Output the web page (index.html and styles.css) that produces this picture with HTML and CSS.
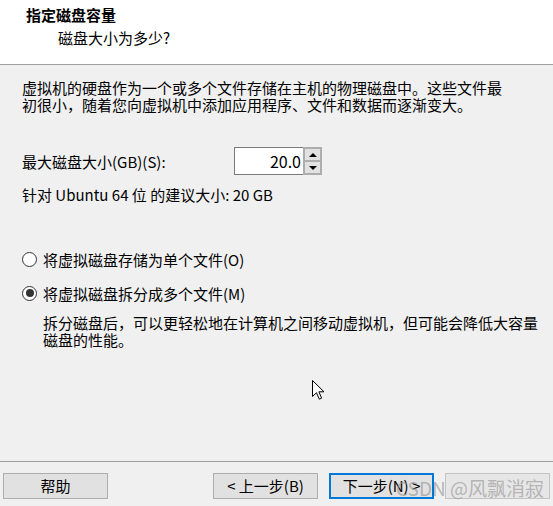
FILE: index.html
```html
<!DOCTYPE html>
<html lang="zh-CN">
<head>
<meta charset="utf-8">
<title>新建虚拟机向导</title>
<link rel="stylesheet" href="styles.css">
</head>
<body>
<div class="dialog">
  <header class="header">
    <div class="title">指定磁盘容量</div>
    <div class="subtitle">磁盘大小为多少?</div>
  </header>
  <main class="content">
    <p class="intro">虚拟机的硬盘作为一个或多个文件存储在主机的物理磁盘中。这些文件最<br>初很小，随着您向虚拟机中添加应用程序、文件和数据而逐渐变大。</p>
    <div class="size-row">
      <label class="size-label">最大磁盘大小(GB)(S):</label>
      <div class="spin">
        <div class="spin-input">20.0</div>
        <div class="spin-btns">
          <div class="spin-btn"><span class="tri-up"></span></div>
          <div class="spin-btn"><span class="tri-down"></span></div>
        </div>
      </div>
    </div>
    <p class="hint">针对 Ubuntu 64 位 的建议大小: 20 GB</p>
    <div class="radio-row first">
      <span class="radio"></span>
      <span class="radio-label">将虚拟磁盘存储为单个文件(O)</span>
    </div>
    <div class="radio-row second">
      <span class="radio checked"></span>
      <span class="radio-label">将虚拟磁盘拆分成多个文件(M)</span>
    </div>
    <p class="desc">拆分磁盘后，可以更轻松地在计算机之间移动虚拟机，但可能会降低大容量<br>磁盘的性能。</p>
  </main>
  <footer class="footer">
    <button class="btn">帮助</button>
    <div class="spacer"></div>
    <button class="btn">&lt; 上一步(B)</button>
    <button class="btn primary">下一步(N) &gt;</button>
    <button class="btn disabled"></button>
  </footer>
  <svg class="cursor" width="14" height="21" viewBox="0 0 14 21">
    <path d="M0.5 0.5 L0.5 16.5 L4.5 12.7 L7.3 19.2 L9.6 18.2 L6.9 11.8 L12 11.8 Z" fill="#fff" stroke="#000" stroke-width="1"/>
  </svg>
  <div class="watermark">CSDN @风飘消寂</div>
</div>
</body>
</html>
```

FILE: styles.css
```css
* { box-sizing: border-box; }
html, body {
  margin: 0;
  padding: 0;
}
body {
  background: #f0f0f0;
  font-family: "Noto Sans CJK SC", "Noto Sans", sans-serif;
  font-size: 15px;
  color: #000;
}
.dialog {
  position: relative;
  width: 553px;
  height: 506px;
  display: flex;
  flex-direction: column;
  overflow: hidden;
}
.header {
  background: #fff;
  height: 65px;
  border-bottom: 1px solid #a0a0a0;
  padding: 5px 0 0 26px;
}
.title {
  font-weight: bold;
  font-size: 15px;
  line-height: 20px;
}
.subtitle {
  padding-left: 32px;
  font-size: 15px;
  line-height: 20px;
  margin-top: 3px;
}
.content {
  flex: 1;
  padding: 14px 10px 0 22px;
}
.intro {
  margin: 0;
  line-height: 17px;
}
.size-row {
  display: flex;
  align-items: center;
  margin-top: 34px;
  height: 28px;
}
.size-label {
  width: 212px;
}
.spin {
  display: flex;
  height: 28px;
}
.spin-input {
  width: 69px;
  height: 28px;
  background: #fff;
  border: 1px solid #7a7a7a;
  border-right: none;
  text-align: right;
  padding-right: 2px;
  line-height: 26px;
  font-size: 16px;
}
.spin-btns {
  display: flex;
  flex-direction: column;
  width: 19px;
  border: 1px solid #adadad;
  background: #fff;
}
.spin-btn {
  flex: 1;
  background: #e1e1e1;
  border: 1px solid #adadad;
  display: flex;
  align-items: center;
  justify-content: center;
  margin: 0;
}
.tri-up {
  width: 0; height: 0;
  border-left: 4px solid transparent;
  border-right: 4px solid transparent;
  border-bottom: 4px solid #000;
}
.tri-down {
  width: 0; height: 0;
  border-left: 4px solid transparent;
  border-right: 4px solid transparent;
  border-top: 4px solid #000;
}
.hint {
  margin: 11px 0 0;
  line-height: 17px;
}
.radio-row {
  display: flex;
  align-items: center;
  height: 20px;
}
.radio-row.first { margin-top: 46px; }
.radio-row.second { margin-top: 14px; }
.radio {
  width: 15px;
  height: 15px;
  border: 1px solid #333;
  border-radius: 50%;
  background: #fff;
  margin-right: 6px;
  display: flex;
  align-items: center;
  justify-content: center;
}
.radio.checked::after {
  content: "";
  width: 8px;
  height: 8px;
  border-radius: 50%;
  background: #333;
}
.desc {
  margin: 11px 0 0 21px;
  line-height: 17px;
}
.footer {
  border-top: 1px solid #a0a0a0;
  height: 45px;
  padding: 11px 3px 0 3px;
  display: flex;
  align-items: flex-start;
  gap: 11px;
}
.spacer { flex: 1; }
.btn {
  width: 105px;
  height: 26px;
  background: #e1e1e1;
  border: 1px solid #adadad;
  font-family: "Noto Sans CJK SC", "Noto Sans", sans-serif;
  font-size: 15px;
  color: #000;
  padding: 0;
  line-height: 22px;
}
.btn.primary {
  border: 2px solid #0078d7;
}
.btn.disabled {
  background: #e6e6e6;
  border-color: #c4c4c4;
}
.cursor {
  position: absolute;
  left: 312px;
  top: 380px;
}
.watermark {
  position: absolute;
  left: 396px;
  top: 476px;
  font-size: 19px;
  line-height: 24px;
  color: rgba(150, 150, 150, 0.65);
  white-space: nowrap;
}
```
